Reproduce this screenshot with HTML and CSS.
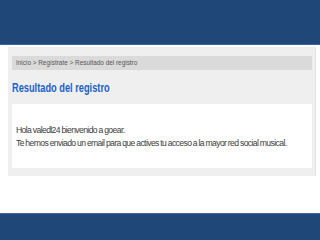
FILE: index.html
```html
<!DOCTYPE html>
<html>
<head>
<meta charset="utf-8">
<link rel="stylesheet" href="styles.css">
</head>
<body>
<div class="page">
  <header class="top"></header>
  <main class="panel">
    <nav class="crumbs"><span class="sq sq-crumb">Inicio &gt; Regístrate &gt; Resultado del registro</span></nav>
    <h1 class="title"><span class="sq sq-title">Resultado del registro</span></h1>
    <section class="box">
      <p class="line">Hola valedl24 bienvenido a goear.</p>
      <p class="line">Te hemos enviado un email para que actives tu acceso a la mayor red social musical.</p>
    </section>
  </main>
  <div class="spacer"></div>
  <footer class="bottom"></footer>
</div>
</body>
</html>
```
FILE: styles.css
```css
html, body {
  margin: 0;
  padding: 0;
  background: #ffffff;
}
.page {
  width: 320px;
  height: 240px;
  display: flex;
  flex-direction: column;
  overflow: hidden;
  font-family: "Liberation Sans", Arial, sans-serif;
}
.top {
  height: 44px;
  background: #1f4777;
  border-bottom: 1px solid #3b6699;
  flex: none;
}
.panel {
  margin: 2px 4px 0 8px;
  background: #efefef;
  border-right: 1px solid #e3e3e3;
  padding: 9px 3px 8px 4px;
  display: flex;
  flex-direction: column;
  flex: none;
}
.sq {
  display: inline-block;
  transform-origin: left center;
  white-space: nowrap;
}
.sq-crumb { transform: scaleX(0.8); }
.sq-title { transform: scaleX(0.74); }
.crumbs {
  height: 14px;
  background: #dadada;
  color: #555555;
  font-size: 8px;
  line-height: 14px;
  padding-left: 4px;
  white-space: nowrap;
}
.title {
  margin: 0;
  height: 34px;
  line-height: 36px;
  font-size: 12.5px;
  font-weight: bold;
  color: #1a62c4;
  white-space: nowrap;
}
.box {
  background: #ffffff;
  height: 64px;
  padding: 20px 0 0 4px;
  box-sizing: border-box;
}
.line {
  margin: 0;
  font-size: 8.6px;
  letter-spacing: -0.6px;
  word-spacing: -0.3px;
  line-height: 13px;
  color: #3c3c3c;
  white-space: nowrap;
}
.spacer {
  flex: 1;
}
.bottom {
  height: 26px;
  background: #1f4777;
  border-top: 1px solid #3b6699;
  flex: none;
}
```
